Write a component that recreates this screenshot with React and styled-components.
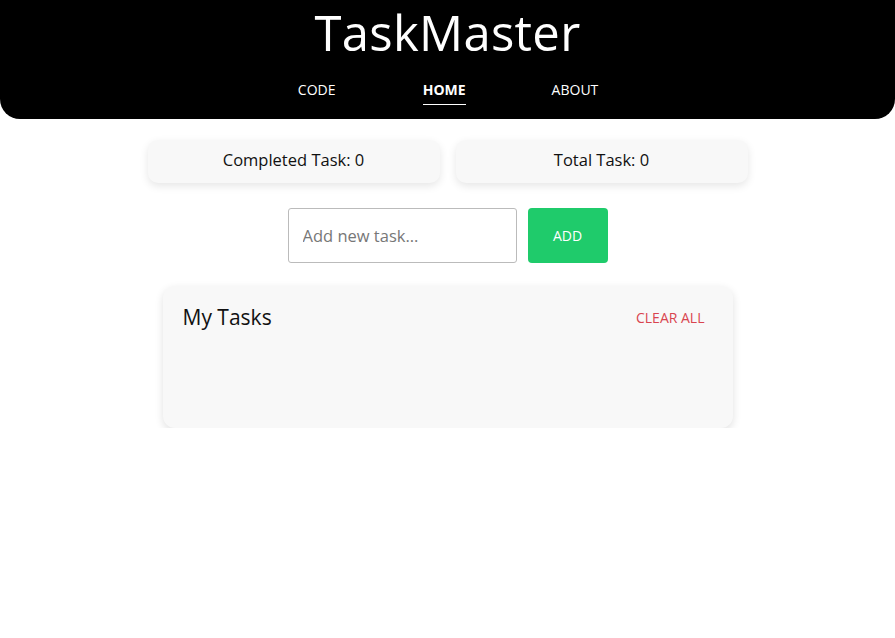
import React, { useState } from "react";
import styled, { createGlobalStyle } from "styled-components";

const GlobalStyle = createGlobalStyle`
  body {
    margin: 0;
    background: #fff;
    font-family: "Open Sans", "Liberation Sans", sans-serif;
  }
`;

const Header = styled.header`
  background: #000;
  color: #fff;
  border-radius: 0 0 20px 20px;
  height: 119px;
  display: flex;
  flex-direction: column;
  align-items: center;
`;

const Title = styled.h1`
  margin: 0;
  padding-top: 3px;
  font-size: 49px;
  font-weight: 400;
  line-height: 58px;
  letter-spacing: 0.3px;
`;

const Nav = styled.nav`
  display: flex;
  gap: 86px;
  margin-top: 19px;
`;

const NavLink = styled.a`
  color: #fff;
  text-decoration: none;
  font-size: 14px;
  font-weight: ${p => (p.$active ? 700 : 500)};
  text-transform: uppercase;
  padding-bottom: 5px;
  border-bottom: 1.5px solid ${p => (p.$active ? "#fff" : "transparent")};
  min-width: 40px;
  text-align: center;
`;

const Main = styled.main`
  display: flex;
  flex-direction: column;
  align-items: center;
  padding-top: 21px;
`;

const Stats = styled.div`
  display: grid;
  grid-template-columns: 292px 292px;
  gap: 16px;
`;

const StatCard = styled.div`
  background: #f8f8f8;
  border-radius: 10px;
  height: 43px;
  display: flex;
  align-items: center;
  justify-content: center;
  font-size: 16.5px;
  line-height: 1;
  padding-bottom: 2px;
  box-sizing: border-box;
  color: #111;
  box-shadow: 0 3px 8px rgba(0, 0, 0, 0.1);
`;

const Form = styled.form`
  display: flex;
  gap: 11px;
  margin-top: 25px;
`;

const Input = styled.input`
  width: 229px;
  height: 55px;
  box-sizing: border-box;
  border: 1px solid #bbb;
  border-radius: 3px;
  padding: 0 14px;
  font-family: inherit;
  font-size: 16.5px;
  color: #333;
  outline: none;
  &::placeholder {
    color: #777;
  }
`;

const AddButton = styled.button`
  width: 80px;
  height: 55px;
  border: none;
  border-radius: 4px;
  background: #1fcb6b;
  color: #fff;
  font-family: inherit;
  font-size: 14px;
  font-weight: 500;
  cursor: pointer;
`;

const TaskCard = styled.section`
  width: 570px;
  height: 142px;
  box-sizing: border-box;
  margin-top: 23px;
  background: #f8f8f8;
  border-radius: 12px;
  box-shadow: 0 3px 8px rgba(0, 0, 0, 0.12);
  padding: 17px 28px 0 20px;
`;

const TaskHead = styled.div`
  display: flex;
  justify-content: space-between;
  align-items: center;
`;

const TaskTitle = styled.h2`
  margin: 0;
  font-size: 21px;
  font-weight: 400;
  color: #111;
`;

const ClearButton = styled.button`
  background: none;
  border: none;
  padding: 0;
  font-family: inherit;
  font-size: 14px;
  color: #d9444f;
  cursor: pointer;
`;

export default function App() {
  const [tasks, setTasks] = useState([]);
  const [text, setText] = useState("");

  const addTask = e => {
    e.preventDefault();
    if (!text.trim()) return;
    setTasks([...tasks, { text, done: false }]);
    setText("");
  };

  return (
    <>
      <GlobalStyle />
      <Header>
        <Title>TaskMaster</Title>
        <Nav>
          <NavLink href="#">Code</NavLink>
          <NavLink href="#" $active>
            Home
          </NavLink>
          <NavLink href="#">About</NavLink>
        </Nav>
      </Header>
      <Main>
        <Stats>
          <StatCard>Completed Task: {tasks.filter(t => t.done).length}</StatCard>
          <StatCard>Total Task: {tasks.length}</StatCard>
        </Stats>
        <Form onSubmit={addTask}>
          <Input
            placeholder="Add new task..."
            value={text}
            onChange={e => setText(e.target.value)}
          />
          <AddButton type="submit">ADD</AddButton>
        </Form>
        <TaskCard>
          <TaskHead>
            <TaskTitle>My Tasks</TaskTitle>
            <ClearButton onClick={() => setTasks([])}>CLEAR ALL</ClearButton>
          </TaskHead>
        </TaskCard>
      </Main>
    </>
  );
}
